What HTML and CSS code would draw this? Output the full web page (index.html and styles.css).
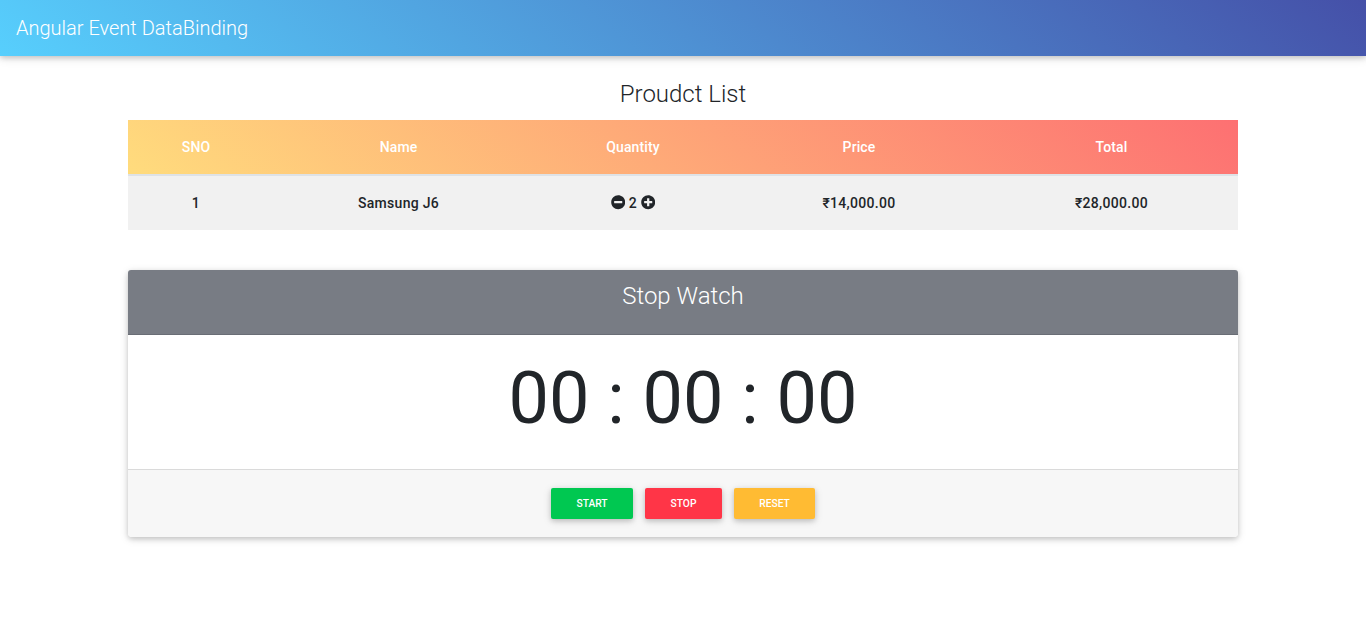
FILE: index.html
```html
<!DOCTYPE html>
<html lang="en">
<head>
<meta charset="utf-8">
<title>Angular Event DataBinding</title>
<link rel="stylesheet" href="styles.css">
</head>
<body>
<nav class="navbar"><span class="brand">Angular Event DataBinding</span></nav>
<main class="container">
  <h4 class="title">Proudct List</h4>
  <table class="table">
    <colgroup><col class="c-sno"><col class="c-name"><col class="c-qty"><col class="c-price"><col class="c-total"></colgroup>
    <thead><tr><th>SNO</th><th>Name</th><th>Quantity</th><th>Price</th><th>Total</th></tr></thead>
    <tbody><tr>
      <td>1</td><td>Samsung J6</td>
      <td><svg class="icon" viewBox="0 0 512 512"><path fill="currentColor" d="M256 8C119 8 8 119 8 256s111 248 248 248 248-111 248-248S393 8 256 8zM124 296c-6.600 0-12-5.400-12-12v-56c0-6.600 5.400-12 12-12h264c6.600 0 12 5.400 12 12v56c0 6.600-5.400 12-12 12H124z"/></svg> 2 <svg class="icon" viewBox="0 0 512 512"><path fill="currentColor" d="M256 8C119 8 8 119 8 256s111 248 248 248 248-111 248-248S393 8 256 8zm144 276c0 6.600-5.400 12-12 12h-92v92c0 6.600-5.400 12-12 12h-56c-6.600 0-12-5.400-12-12v-92h-92c-6.600 0-12-5.400-12-12v-56c0-6.600 5.400-12 12-12h92v-92c0-6.600 5.400-12 12-12h56c6.600 0 12 5.400 12 12v92h92c6.600 0 12 5.400 12 12v56z"/></svg></td>
      <td>₹14,000.00</td><td>₹28,000.00</td>
    </tr></tbody>
  </table>
  <section class="card">
    <header class="card-header"><h4 class="card-title">Stop Watch</h4></header>
    <div class="card-body"><div class="clock">00 : 00 : 00</div></div>
    <footer class="card-footer">
      <button class="btn btn-start">START</button>
      <button class="btn btn-stop">STOP</button>
      <button class="btn btn-reset">RESET</button>
    </footer>
  </section>
</main>
</body>
</html>
```
FILE: styles.css
```css
*, *::before, *::after { box-sizing: border-box; }
body {
  margin: 0;
  min-height: 100vh;
  font: 400 16px/1.5 Roboto, sans-serif;
  color: #212529;
  background: #fff;
}
.navbar {
  display: flex;
  align-items: center;
  height: 56px;
  padding: 0 16px;
  background: linear-gradient(40deg, #57cffd, #4550a8);
  box-shadow: 0 2px 5px rgba(0,0,0,.16), 0 2px 10px rgba(0,0,0,.12);
}
.brand { color: #fff; font-size: 20px; font-weight: 300; line-height: 30px; }
.container { width: 1110px; margin: 24px auto 0; }
.title {
  margin: 0 0 11px;
  font-size: 24px;
  font-weight: 300;
  line-height: 29px;
  text-align: center;
}
.table {
  width: 100%;
  table-layout: fixed;
  border-collapse: collapse;
  text-align: center;
  font-size: 14px;
}
.c-sno { width: 136px; }
.c-name { width: 269px; }
.c-qty { width: 200px; }
.c-price { width: 252px; }
.table thead { background: linear-gradient(40deg, #ffdc7d, #fd7072); }
.table th { height: 55px; padding: 0; font-weight: 500; letter-spacing: .1px; color: #fff; border-bottom: 2px solid #dee2e6; }
.table td { height: 55px; padding: 0; font-weight: 500; letter-spacing: .3px; }
.table tbody { background: #f1f1f1; }
.icon { width: 14.4px; height: 14.4px; vertical-align: -2px; }
.card {
  margin-top: 40px;
  border-radius: 4px;
  box-shadow: 0 2px 5px rgba(0,0,0,.16), 0 2px 10px rgba(0,0,0,.12);
}
.card-header {
  height: 65px;
  padding-top: 12px;
  background: #787c84;
  border-bottom: 1px solid #696d75;
  border-radius: 3px 3px 0 0;
}
.card-title { margin: 0; font-size: 24px; font-weight: 300; line-height: 29px; text-align: center; color: #fff; }
.card-body { height: 134px; padding-top: 21px; }
.clock { font-size: 72px; line-height: 86px; text-align: center; }
.card-footer {
  display: flex;
  justify-content: center;
  align-items: center;
  gap: 12px;
  height: 68px;
  background: #f7f7f7;
  border-top: 1px solid #dadada;
  border-radius: 0 0 4px 4px;
}
.btn {
  height: 31px;
  padding: 0;
  border: 0;
  border-radius: 2px;
  font: 500 10.24px/15px Roboto, sans-serif;
  color: #fff;
  box-shadow: 0 2px 5px rgba(0,0,0,.16), 0 2px 10px rgba(0,0,0,.12);
}
.btn-start { width: 82px; background: #00c851; }
.btn-stop { width: 77px; background: #ff3547; }
.btn-reset { width: 81px; background: #ffbb33; }
```
